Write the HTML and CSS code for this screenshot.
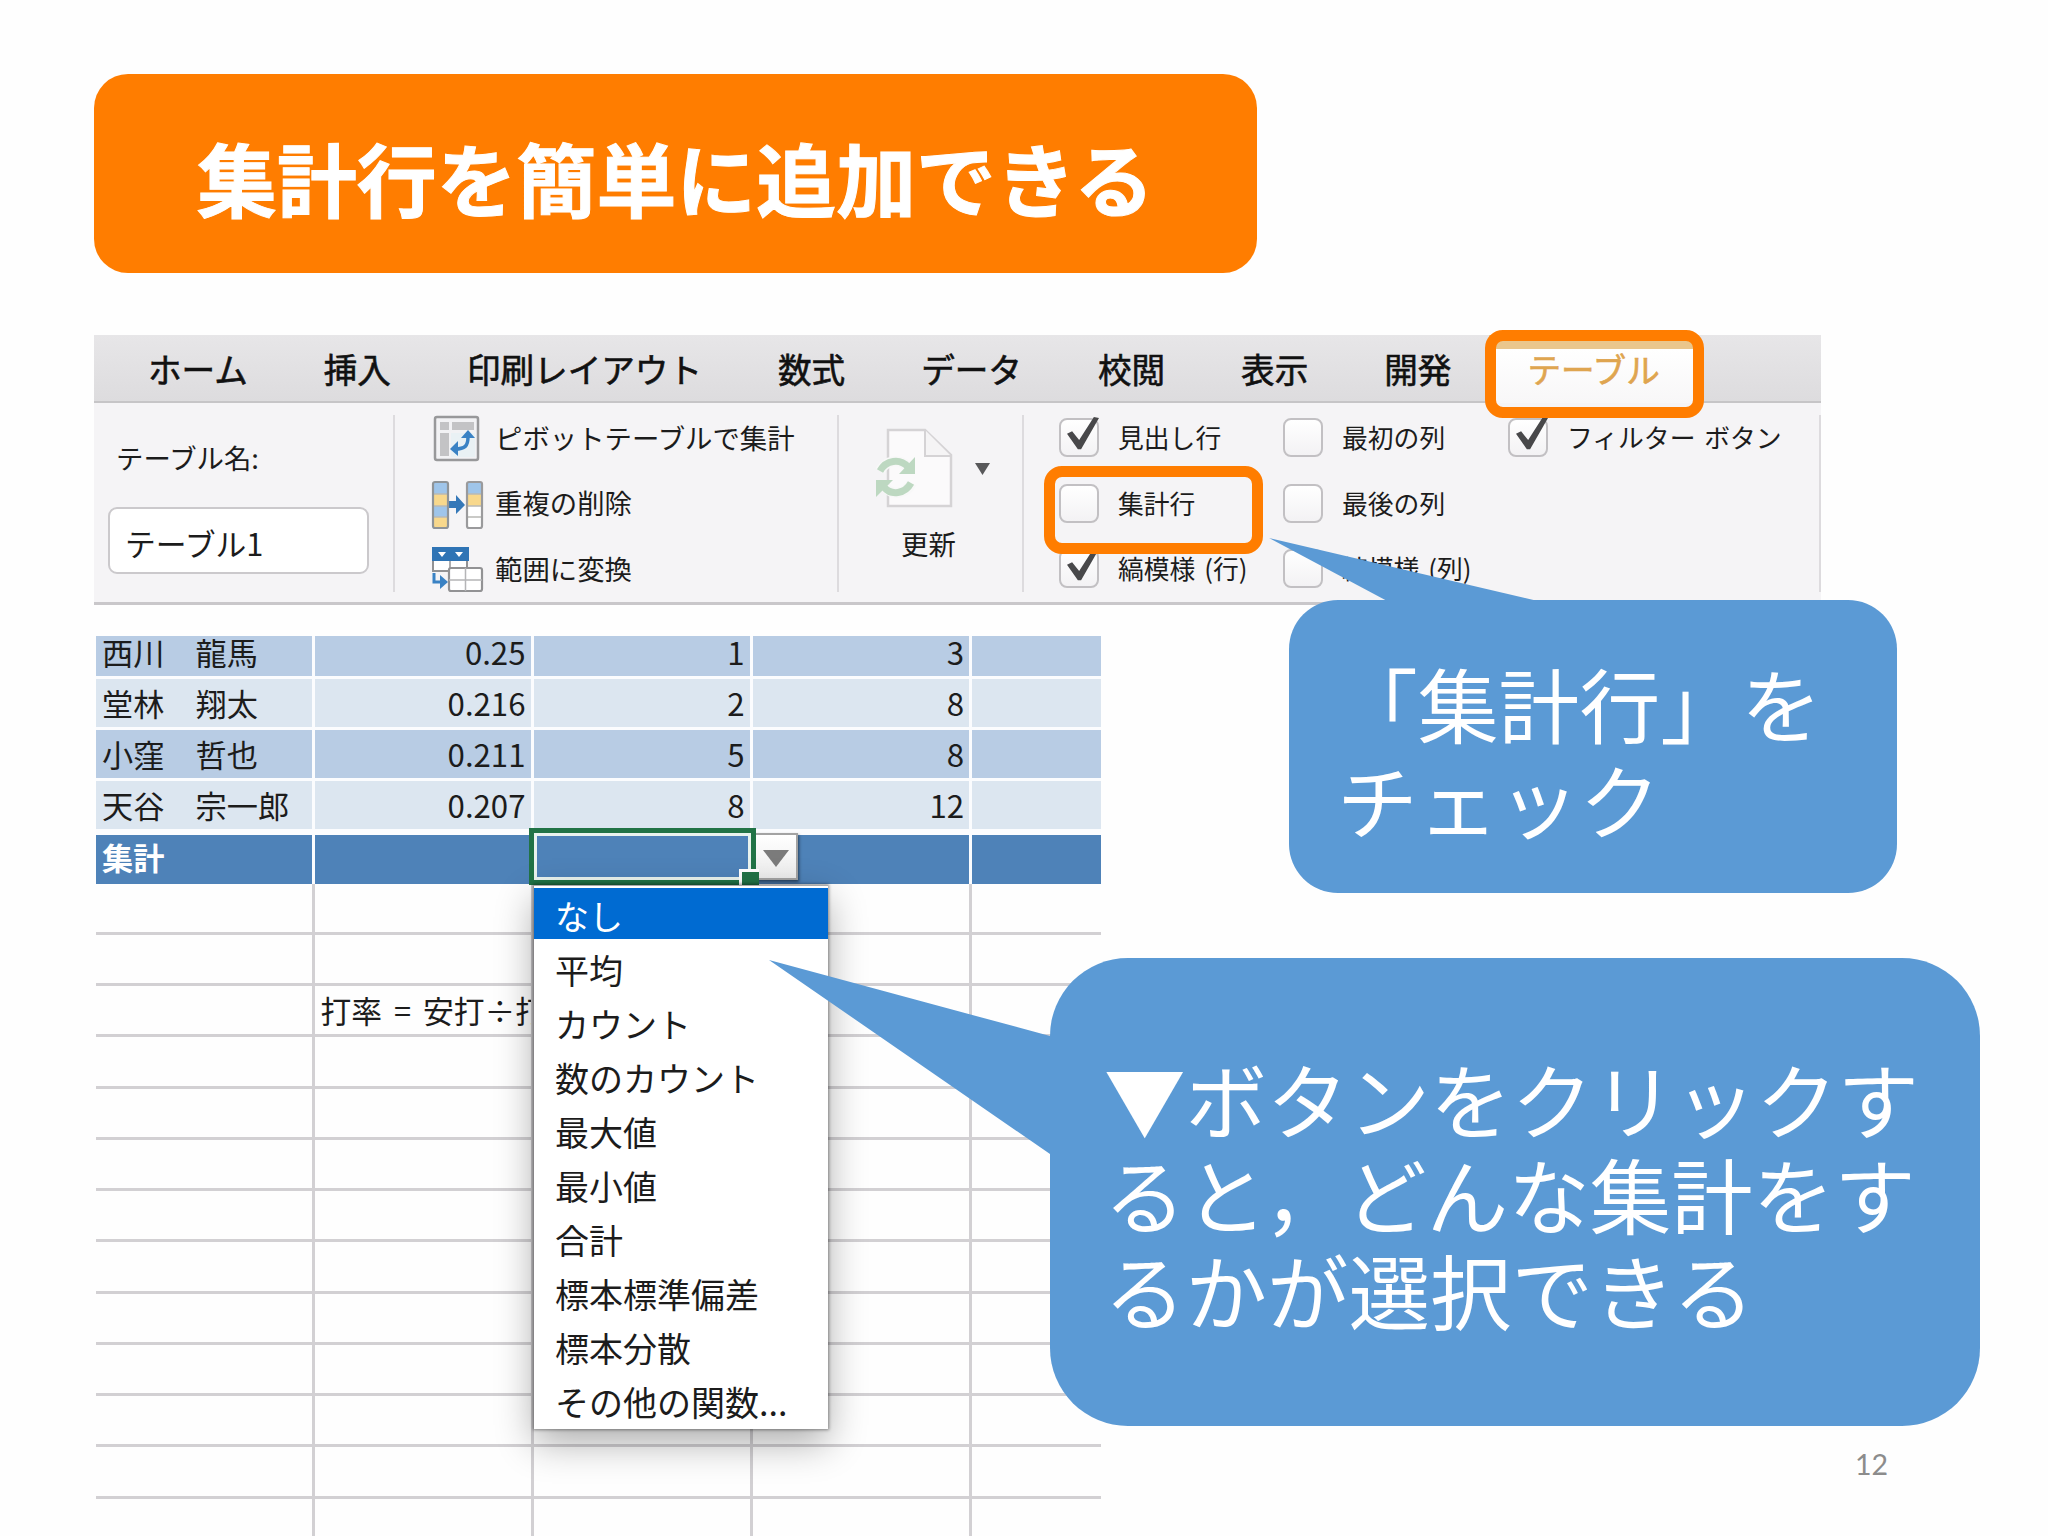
FILE: index.html
```html
<!DOCTYPE html>
<html lang="ja">
<head>
    <meta charset="UTF-8">
    <title>集計行を簡単に追加できる</title>
    <link rel="stylesheet" href="styles.css">
</head>
<body>

<h1 class="title">集計行を簡単に追加できる</h1>

<div class="ribbon">
    <div class="tabs">
        <span>ホーム</span>
        <span>挿入</span>
        <span>印刷レイアウト</span>
        <span>数式</span>
        <span>データ</span>
        <span>校閲</span>
        <span>表示</span>
        <span>開発</span>
        <span class="active">テーブル</span>
    </div>
    <div class="panel">
        <div class="group name">
            <label>テーブル名:</label>
            <div class="input">テーブル1</div>
        </div>
        <div class="group tools">
            <div class="tool">
                <svg width="54" height="50" viewBox="0 0 54 50">
                    <rect x="5" y="3" width="43" height="43" rx="2" fill="#f2f2f4" stroke="#98989a" stroke-width="2.5"/>
                    <path d="M10 8h9v8h-9zM22 8h22v8H22zM10 19h9v23h-9z" fill="#c3c3c5"/>
                    <path d="M21 19h24v24H21z" fill="#e9f1f4"/>
                    <path d="M25 35c10 0 13-3 13-12" fill="none" stroke="#3a82c4" stroke-width="3.5"/>
                    <path d="M31 24l7-8 7 8zM28 27l-8 8 8 7z" fill="#3a82c4"/>
                </svg>
                <span>ピボットテーブルで集計</span>
            </div>
            <div class="tool">
                <svg width="54" height="50" viewBox="0 0 54 50">
                    <path d="M3 2h15v12H3zM3 26h15v11H3zM37 2h15v12H37z" fill="#9fc5ea"/>
                    <path d="M3 14h15v12H3zM3 37h15v11H3zM37 14h15v12H37z" fill="#f8d88c"/>
                    <path d="M37 26h15v22H37z" fill="#fff"/>
                    <path d="M3 14h15M3 26h15M3 37h15M37 14h15M37 26h15M37 37h15" stroke="#b9b9b5" stroke-width="1.5"/>
                    <path d="M18 21h8v-6l9 10-9 9v-6h-8z" fill="#3578b8"/>
                    <rect x="3" y="2" width="15" height="46" rx="2" fill="none" stroke="#8f9498" stroke-width="2.2"/>
                    <rect x="37" y="2" width="15" height="46" rx="2" fill="none" stroke="#9a9a9c" stroke-width="2.2"/>
                </svg>
                <span>重複の削除</span>
            </div>
            <div class="tool">
                <svg width="54" height="50" viewBox="0 0 54 50">
                    <path d="M3 15h34v11H3z" fill="#fff" stroke="#929294" stroke-width="2"/>
                    <path d="M20 15v11" stroke="#929294" stroke-width="1.5"/>
                    <path d="M2 2h37v14H2z" fill="#2f74b5"/>
                    <path d="M8 7h8l-4 5zM25 7h8l-4 5z" fill="#fff"/>
                    <path d="M4 28v9h9" fill="none" stroke="#3a82c4" stroke-width="3"/>
                    <path d="M10 30l8 7-8 7z" fill="#3a82c4"/>
                    <rect x="19" y="23" width="33" height="23" rx="2" fill="#fff" stroke="#929294" stroke-width="2.2"/>
                    <path d="M35.500 23v23M19 35h33" stroke="#b5b5b7" stroke-width="1.5"/>
                </svg>
                <span>範囲に変換</span>
            </div>
        </div>
        <div class="group refresh">
            <svg width="124" height="90" viewBox="0 0 124 90">
                <path d="M18 6h37l26 25v51H18z" fill="#fbfafb" stroke="#d5d3d5" stroke-width="2.5"/>
                <path d="M55 6v26h26" fill="#f5f4f5" stroke="#d5d3d5" stroke-width="2"/>
                <path d="M10 47c6-11 20-13 28-4M42 59c-6 11-20 13-27 4" fill="none" stroke="#f8f8f8" stroke-width="10"/>
                <path d="M10 47c6-11 20-13 28-4M41 59c-6 11-20 13-27 4" fill="none" stroke="#bdd8c1" stroke-width="7"/>
                <path d="M45 33v17H29zM6 73V56h17z" fill="#bdd8c1"/>
                <path d="M105 39h15l-7.500 12z" fill="#58585a"/>
            </svg>
            <span>更新</span>
        </div>
        <div class="group options">
            <label class="on"><i></i>見出し行</label>
            <label><i></i>最初の列</label>
            <label class="on"><i></i>フィルター ボタン</label>
            <label><i></i>集計行</label>
            <label><i></i>最後の列</label>
            <label class="empty"></label>
            <label class="on"><i></i>縞模様 (行)</label>
            <label><i></i>縞模様 (列)</label>
        </div>
    </div>
    <div class="mark mark-tab"></div>
    <div class="mark mark-option"></div>
</div>

<div class="sheet">
    <div class="row dark first"><b>西川　龍馬</b><b>0.25</b><b>1</b><b>3</b><b></b></div>
    <div class="row light"><b>堂林　翔太</b><b>0.216</b><b>2</b><b>8</b><b></b></div>
    <div class="row dark"><b>小窪　哲也</b><b>0.211</b><b>5</b><b>8</b><b></b></div>
    <div class="row light last"><b>天谷　宗一郎</b><b>0.207</b><b>8</b><b>12</b><b></b></div>
    <div class="row total"><b>集計</b><b></b><b></b><b></b><b></b></div>
    <div class="row"><b></b><b></b><b></b><b></b><b></b></div>
    <div class="row"><b></b><b></b><b></b><b></b><b></b></div>
    <div class="row"><b></b><b class="formula">打率 = 安打÷打</b><b></b><b></b><b></b></div>
    <div class="row"><b></b><b></b><b></b><b></b><b></b></div>
    <div class="row"><b></b><b></b><b></b><b></b><b></b></div>
    <div class="row"><b></b><b></b><b></b><b></b><b></b></div>
    <div class="row"><b></b><b></b><b></b><b></b><b></b></div>
    <div class="row"><b></b><b></b><b></b><b></b><b></b></div>
    <div class="row"><b></b><b></b><b></b><b></b><b></b></div>
    <div class="row"><b></b><b></b><b></b><b></b><b></b></div>
    <div class="row"><b></b><b></b><b></b><b></b><b></b></div>
    <div class="row"><b></b><b></b><b></b><b></b><b></b></div>
    <div class="row"><b></b><b></b><b></b><b></b><b></b></div>
</div>

<div class="dropdown-button"></div>
<div class="selection"></div>
<ul class="menu">
    <li class="selected">なし</li>
    <li>平均</li>
    <li>カウント</li>
    <li>数のカウント</li>
    <li>最大値</li>
    <li>最小値</li>
    <li>合計</li>
    <li>標本標準偏差</li>
    <li>標本分散</li>
    <li>その他の関数...</li>
</ul>

<div class="callout callout-check">
    <svg class="tail" width="280" height="66" viewBox="0 0 280 66"><path d="M0 0L120 64H273z"/></svg>
    <p>「集計行」を<br>チェック</p>
</div>

<div class="callout callout-button">
    <svg class="tail" width="284" height="196" viewBox="0 0 284 196"><path d="M0 0L281 76h3v118h-3z"/></svg>
    <p>▼ボタンをクリックす<br>ると，どんな集計をす<br>るかが選択できる</p>
</div>

<div class="page-number">12</div>

</body>
</html>
```
FILE: styles.css
```css
* {
    box-sizing: border-box;
}
body {
    position: relative;
    margin: 0;
    width: 2048px;
    height: 1536px;
    padding: 74px 0 0 94px;
    overflow: hidden;
    background: #fefefe;
    color: #1c1c1c;
    font-family: "Noto Sans CJK JP", sans-serif;
}
.title {
    display: flex;
    align-items: center;
    width: 1163px;
    height: 199px;
    margin: 0;
    padding: 4px 0 0 103px;
    border-radius: 34px;
    background: #ff7d00;
    color: #fff;
    font-size: 79.9px;
    font-weight: 700;
    white-space: nowrap;
    -webkit-text-stroke: 1px currentColor;
}

/* ribbon */
.ribbon {
    position: relative;
    width: 1727px;
    height: 270px;
    margin-top: 62px;
    background: #f5f4f6;
    border-bottom: 3px solid #c9c7ca;
}
.tabs {
    display: flex;
    gap: 76px;
    height: 68px;
    padding-left: 54px;
    border-bottom: 2px solid #c6c5c7;
    background: linear-gradient(#e7e6e8, #dddcde);
    font-size: 33.6px;
    line-height: 67px;
    color: #111;
    white-space: nowrap;
    -webkit-text-stroke: 0.6px currentColor;
}
.tabs .active {
    height: 68px;
    margin: 0 -38px;
    padding: 0 38px;
    background: linear-gradient(#eac68c 14px, #fff 14px, #f8f7f8);
    color: #dfa550;
}
.panel {
    display: flex;
    padding: 12px 0;
    height: 199px;
}
.group {
    height: 177px;
    border-right: 2px solid #dddbde;
    font-size: 27.4px;
}
.name {
    width: 301px;
    padding: 23px 0 0 14px;
}
.name label {
    display: block;
    height: 69px;
    padding-left: 8px;
    line-height: 38px;
}
.input {
    width: 261px;
    height: 67px;
    padding-left: 15px;
    border: 2.5px solid #cbc9cc;
    border-radius: 9px;
    background: #fff;
    font-size: 30.8px;
    line-height: 67px;
}
.tools {
    width: 444px;
    padding-left: 35px;
}
.tool {
    display: flex;
    align-items: center;
    gap: 11px;
    height: 65.5px;
    margin-top: -2px;
    margin-bottom: 2px;
    white-space: nowrap;
}
.tool svg {
    margin-top: -13px;
}
.tool span {
    margin-top: -18px;
}
.refresh {
    width: 185px;
    padding: 9px 0 0 31px;
}
.refresh svg {
    display: block;
}
.refresh span {
    display: block;
    padding-left: 31px;
    line-height: 58px;
}
.options {
    display: grid;
    grid-template-columns: 224px 225px 1fr;
    grid-auto-rows: 65.5px;
    flex: 1;
    padding: 3px 0 0 35px;
    font-size: 25.8px;
}
.options label {
    display: flex;
    gap: 19px;
    height: 39px;
    line-height: 38px;
    word-spacing: 3px;
    white-space: nowrap;
}
.options i {
    position: relative;
    width: 40px;
    height: 39px;
    border: 2px solid #c2c0c3;
    border-radius: 8px;
    background: linear-gradient(#fff, #f3f2f4);
}
.options .on i::after {
    content: "";
    position: absolute;
    left: 6px;
    top: -3px;
    width: 32px;
    height: 34px;
    background: #48484a;
    clip-path: polygon(0 49%, 16% 42%, 38% 68%, 84% 0, 100% 3%, 44% 95%, 34% 95%);
}
.mark {
    position: absolute;
    width: 219px;
    height: 88px;
    border: 11px solid #ff7d00;
    border-radius: 18px;
}
.mark-tab {
    left: 1391px;
    top: -5px;
}
.mark-option {
    left: 950px;
    top: 131px;
}

/* worksheet */
.sheet {
    width: 1005px;
    margin: 31px 0 0 2px;
    font-size: 31.2px;
}
.row {
    display: grid;
    grid-template-columns: 218.500px 219px 219px 219.5px 1fr;
    height: 51.25px;
    line-height: 48px;
}
.row b {
    padding: 0 8px 0 6px;
    border-right: 3px solid #d2d0d3;
    border-bottom: 3px solid #d2d0d3;
    font-weight: 400;
    text-align: right;
    white-space: nowrap;
}
.row b:first-child {
    text-align: left;
}
.row b:last-child {
    border-right: 0;
}
.row.dark b,
.row.light b,
.row.total b {
    padding-right: 5px;
    border-color: #fbfcfe;
}
.row.dark b {
    background: #b8cce4;
}
.row.light b {
    background: #dce6f0;
}
.row.first {
    height: 42.5px;
    line-height: 32px;
}
.row.last {
    height: 54px;
}
.row.last b {
    border-bottom-width: 9px;
}
.row.total {
    height: 48.5px;
    line-height: 44px;
    color: #fff;
}
.row.total b {
    border-bottom: 0;
    background: #4e82b8;
    font-weight: 700;
}
.row .formula {
    overflow: hidden;
    padding-right: 0;
    font-size: 30.8px;
    text-align: left;
    word-spacing: 5px;
}
.selection {
    position: absolute;
    left: 529px;
    top: 828px;
    width: 227px;
    height: 57px;
    border: 5px solid #217346;
    box-shadow: inset 0 0 0 3px #e9f3ee;
}
.selection::after {
    content: "";
    position: absolute;
    right: -8px;
    bottom: -5px;
    width: 17px;
    height: 13px;
    border: solid #fff;
    border-width: 3px 0 0 3px;
    background: #217346;
}
.dropdown-button {
    position: absolute;
    left: 754px;
    top: 833px;
    width: 44px;
    height: 47px;
    border: 2px solid #a3a3a3;
    background: linear-gradient(#fff, #ececec);
    box-shadow: 1px 2px 3px rgba(0, 0, 0, 0.5);
}
.dropdown-button::after {
    content: "";
    position: absolute;
    left: 7px;
    top: 15px;
    border: solid transparent;
    border-width: 17px 13px 0;
    border-top-color: #7b7b7b;
}
.menu {
    position: absolute;
    left: 534px;
    top: 885px;
    width: 294px;
    height: 544px;
    margin: 0;
    padding: 2px 0 0;
    list-style: none;
    background: #fff;
    border-top: 1px solid #aaa;
    box-shadow: 0 0 3px 1px rgba(0, 0, 0, 0.4), 0 14px 36px rgba(0, 0, 0, 0.32);
    font-size: 34px;
}
.menu li {
    height: 54px;
    padding-left: 21px;
    line-height: 56px;
    white-space: nowrap;
}
.menu .selected {
    background: linear-gradient(#006bd2 51px, #fff 51px);
    color: #fff;
}

/* speech balloons */
.callout {
    position: absolute;
    display: flex;
    align-items: center;
    background: #5b9ad5;
    color: #fff;
    font-size: 81.5px;
    font-weight: 400;
    line-height: 95.5px;
    white-space: nowrap;
}
.callout p {
    margin: 0;
}
.tail {
    position: absolute;
    fill: #5b9ad5;
}
.callout-check {
    left: 1289px;
    top: 600px;
    width: 608px;
    height: 293px;
    padding: 6px 0 0 48px;
    border-radius: 49px;
    font-size: 80.8px;
}
.callout-check .tail {
    left: -20px;
    top: -62px;
}
.callout-button {
    left: 1050px;
    top: 958px;
    width: 930px;
    height: 468px;
    padding: 2px 0 0 54px;
    border-radius: 78px;
}
.callout-button .tail {
    left: -281px;
    top: 2px;
}
.page-number {
    position: absolute;
    left: 1855px;
    top: 1446px;
    color: #8c8c8c;
    font-family: Lato, sans-serif;
    font-size: 28.5px;
    line-height: 36px;
}
```
